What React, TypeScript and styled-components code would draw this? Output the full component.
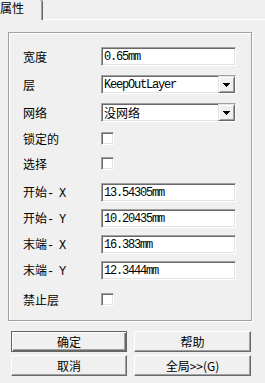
import React from "react";
import styled, { createGlobalStyle } from "styled-components";

const Global = createGlobalStyle`
  html, body { margin: 0; padding: 0; background: #f0f0f0; }
  body {
    width: 265px; height: 383px; overflow: hidden;
    font-family: "Noto Sans CJK SC", "Noto Sans", sans-serif;
    font-size: 12px; color: #000;
  }
`;

const Window = styled.div`
  width: 265px;
  height: 383px;
  display: flex;
  flex-direction: column;
  background: #f0f0f0;
`;

const TabStrip = styled.div`
  height: 20px;
  box-sizing: border-box;
  border-bottom: 1px solid #fff;
  display: flex;
  align-items: flex-start;
`;

const Tab = styled.div`
  width: 43px;
  height: 20px;
  box-sizing: border-box;
  background: #f0f0f0;
  border-right: 1px solid #696969;
  border-top-right-radius: 2px;
  box-shadow: inset -1px 0 #a0a0a0;
  font-size: 12px;
  line-height: 16px;
  padding-left: 0;
  white-space: nowrap;
`;

const Panel = styled.div`
  padding: 12px 0 0 8px;
  display: flex;
  flex-direction: column;
`;

const GroupBox = styled.div`
  width: 244px;
  height: 289px;
  box-sizing: border-box;
  border: 1px solid #a0a0a0;
  box-shadow: inset 1px 1px #fff, 1px 1px #fff;
  padding: 14px 0 0 14px;
  display: flex;
  flex-direction: column;
`;

const Row = styled.div<{ $gap: number }>`
  display: flex;
  align-items: center;
  height: 19px;
  margin-top: ${(p) => p.$gap}px;
`;

const Label = styled.div`
  width: 78px;
  font-size: 12px;
  line-height: 14px;
  white-space: nowrap;
`;

const Latin = styled.span`
  font-family: "Liberation Mono", monospace;
  font-size: 12px;
  letter-spacing: -1.2px;
`;

const Field = styled.div<{ $cjk?: boolean }>`
  width: 135px;
  height: 19px;
  box-sizing: border-box;
  background: #fff;
  border: 1px solid;
  border-color: #a0a0a0 #fff #fff #a0a0a0;
  box-shadow: inset 1px 1px #696969, inset -1px -1px #e3e3e3;
  padding-left: 2px;
  display: flex;
  align-items: center;
  font-family: ${(p) =>
    p.$cjk ? `"Noto Sans CJK SC", sans-serif` : `"Liberation Mono", monospace`};
  font-size: 12px;
  letter-spacing: ${(p) => (p.$cjk ? "0" : "-1.2px")};
  white-space: nowrap;
  overflow: hidden;
`;

const Combo = styled(Field)`
  padding-right: 0;
  align-items: stretch;
`;

const ComboText = styled.div`
  flex: 1;
  display: flex;
  align-items: center;
`;

const DropButton = styled.div`
  width: 17px;
  box-sizing: border-box;
  background: #f0f0f0;
  border: 1px solid;
  border-color: #e3e3e3 #696969 #696969 #e3e3e3;
  box-shadow: inset 1px 1px #fff, inset -1px -1px #a0a0a0;
  display: flex;
  align-items: center;
  justify-content: center;
`;

const CheckBox = styled.div`
  width: 13px;
  height: 13px;
  box-sizing: border-box;
  background: #fff;
  border: 1px solid;
  border-color: #a0a0a0 #fff #fff #a0a0a0;
  box-shadow: inset 1px 1px #696969, inset -1px -1px #e3e3e3;
`;

const ButtonGrid = styled.div`
  display: grid;
  grid-template-columns: 116px 117px;
  column-gap: 7px;
  row-gap: 3px;
  margin: 10px 0 0 3px;
`;

const Button = styled.div<{ $default?: boolean }>`
  height: 21px;
  box-sizing: border-box;
  background: #f0f0f0;
  display: flex;
  align-items: center;
  justify-content: center;
  font-size: 12px;
  white-space: nowrap;
  border: 1px solid;
  border-color: ${(p) =>
    p.$default ? "#646464" : "#fff #696969 #696969 #fff"};
  box-shadow: ${(p) =>
    p.$default
      ? "inset 1px 1px #fff, inset -1px -1px #696969, inset -2px -2px #a0a0a0"
      : "inset -1px -1px #a0a0a0"};
`;

const Arrow = () => (
  <svg width="7" height="4" viewBox="0 0 7 4" shapeRendering="crispEdges">
    <path d="M0 0h7v1H0z M1 1h5v1H1z M2 2h3v1H2z M3 3h1v1H3z" fill="#000" />
  </svg>
);

type Item =
  | { kind: "field"; label: React.ReactNode; value: string; gap: number }
  | { kind: "combo"; label: React.ReactNode; value: string; cjk?: boolean; gap: number }
  | { kind: "check"; label: React.ReactNode; gap: number };

const items: Item[] = [
  { kind: "field", label: "宽度", value: "0.65mm", gap: 0 },
  { kind: "combo", label: "层", value: "KeepOutLayer", gap: 9 },
  { kind: "combo", label: "网络", value: "没网络", cjk: true, gap: 9 },
  { kind: "check", label: "锁定的", gap: 7 },
  { kind: "check", label: "选择", gap: 6 },
  { kind: "field", label: <>开始<Latin>- X</Latin></>, value: "13.54305mm", gap: 10 },
  { kind: "field", label: <>开始<Latin>- Y</Latin></>, value: "10.20435mm", gap: 7 },
  { kind: "field", label: <>末端<Latin>- X</Latin></>, value: "16.383mm", gap: 7 },
  { kind: "field", label: <>末端<Latin>- Y</Latin></>, value: "12.3444mm", gap: 7 },
  { kind: "check", label: "禁止层", gap: 10 },
];

export default function App() {
  return (
    <Window>
      <Global />
      <TabStrip>
        <Tab>属性</Tab>
      </TabStrip>
      <Panel>
        <GroupBox>
          {items.map((it, i) => (
            <Row key={i} $gap={it.gap}>
              <Label>{it.label}</Label>
              {it.kind === "field" && <Field>{it.value}</Field>}
              {it.kind === "combo" && (
                <Combo $cjk={it.cjk}>
                  <ComboText>{it.value}</ComboText>
                  <DropButton>
                    <Arrow />
                  </DropButton>
                </Combo>
              )}
              {it.kind === "check" && <CheckBox />}
            </Row>
          ))}
        </GroupBox>
        <ButtonGrid>
          <Button $default>确定</Button>
          <Button>帮助</Button>
          <Button>取消</Button>
          <Button>全局&gt;&gt;(G)</Button>
        </ButtonGrid>
      </Panel>
    </Window>
  );
}
